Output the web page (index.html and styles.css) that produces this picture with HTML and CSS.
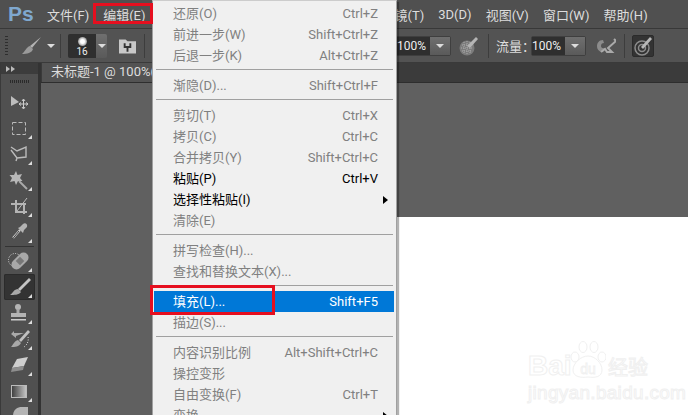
FILE: index.html
```html
<!DOCTYPE html>
<html lang="zh">
<head>
<meta charset="utf-8">
<title>Photoshop 编辑菜单</title>
<link rel="stylesheet" href="styles.css">
</head>
<body>
<div class="app">
	<div class="menubar">
		<span class="logo">Ps</span>
		<span>文件(F)</span>
		<span class="on">编辑(E)</span>
		<span class="bar_gap"></span>
		<span>镜(T)</span>
		<span>3D(D)</span>
		<span>视图(V)</span>
		<span>窗口(W)</span>
		<span>帮助(H)</span>
	</div>
	<div class="options">
		<i class="grip"></i>
		<svg class="opt_brush" width="20" height="20" viewBox="0 0 20 20"><path d="M19 1 L10 12 L8 10 Z" fill="#b4b4b4"/><path d="M8 10 L11 13 C10 17 5 18 0 18 C3 16 4 11 8 10 Z" fill="#9a9a9a"/></svg>
		<i class="caret"></i>
		<i class="sep"></i>
		<div class="preset">
			<div class="preset_val"><b></b><span>16</span></div>
			<div class="drop"><i class="caret"></i></div>
		</div>
		<svg class="opt_stamp" width="17" height="16" viewBox="0 0 18 16"><path d="M0 1 H7 L9 3 H18 V16 H0 Z" fill="#c8c8c8"/><path d="M5 5 H7 V8 H11 V5 H13 V10 H10 V14 H8 V10 H5 Z" fill="#333"/></svg>
		<i class="sep sep_first"></i>
		<div class="field field_a"><div class="val">100%</div><div class="drop"><i class="caret"></i></div></div>
		<svg class="opt_icon icon_a" width="20" height="20" viewBox="0 0 20 20"><circle cx="8" cy="12" r="7.5" fill="#7c7c7c"/><path d="M3 9 H13 M2 12 H14 M3 15 H13 M5 6 V18 M8 5 V19 M11 6 V18" stroke="#aaa" stroke-dasharray="1 1"/><path d="M17 1 L19 3 L11 12 L8 10 Z" fill="#b4b4b4"/></svg>
		<i class="sep sep_b"></i>
		<span class="flow">流量：</span>
		<div class="field field_b"><div class="val">100%</div><div class="drop"><i class="caret"></i></div></div>
		<svg class="opt_icon icon_b" width="20" height="16" viewBox="0 0 20 16"><path d="M7 2 C3 2 1 5 1 8 C1 12 4 14 7 14 L9 10 C6 11 5 9 5 8 C5 6 6 5 8 5 Z" fill="#8c8c8c"/><path d="M18 1 L20 3 L12 10 L16 14 H11 L9 11 L5 14" fill="none" stroke="#aaa" stroke-width="2"/></svg>
		<i class="sep sep_c"></i>
		<div class="toggle"><svg width="20" height="20" viewBox="0 0 20 20"><circle cx="9" cy="12" r="7" fill="none" stroke="#8c8c8c" stroke-width="1.5"/><circle cx="9" cy="12" r="3.5" fill="none" stroke="#8c8c8c" stroke-width="1.5"/><path d="M17 1 L19 3 L10 13 L8 11 Z" fill="#b8b8b8"/></svg></div>
	</div>
	<div class="main">
		<div class="tools">
			<div class="tools_head"><i></i><i></i></div>
			<div class="tools_grip"></div>
			<div class="tool"><svg viewBox="0 0 31 26"><path d="M7 7 L15 13 L7 17 Z" fill="#bdbdbd"/><path d="M19.5 10.5 V19.5 M15 15 H24" stroke="#ccc"/><path d="M18 12 L19.5 10 L21 12 M18 18 L19.5 20 L21 18 M17 13.5 L15 15 L17 16.5 M22 13.5 L24 15 L22 16.5" stroke="#ccc" fill="none"/></svg></div>
			<div class="tool more"><svg viewBox="0 0 31 26"><rect x="8.5" y="7.5" width="13" height="12" fill="none" stroke="#bbb" stroke-dasharray="4 2"/></svg></div>
			<div class="tool more"><svg viewBox="0 0 31 26"><path d="M7 6 L13 10 L22 6 V16 L13 17 L7 9 M13 17 L12 20" fill="none" stroke="#bbb" stroke-width="1.4"/></svg></div>
			<div class="tool more"><svg viewBox="0 0 31 26"><path d="M12 4 L13.5 8 L18 7 L16 11 L18.5 14 L14 14 L12 18 L10.5 14 L6 15 L8 11 L5.5 8 L10 8 Z" fill="#b8b8b8"/><path d="M15 14 L23 22" stroke="#aaa" stroke-width="2"/></svg></div>
			<div class="tool more"><svg viewBox="0 0 31 26"><path d="M7 11 H22 M12 7 V19 H23 M20 11 V21" fill="none" stroke="#b4b4b4" stroke-width="2"/><path d="M13 18 L23 5" stroke="#bbb"/></svg></div>
			<div class="tool more"><svg viewBox="0 0 31 26"><path d="M9 19 L16 11" stroke="#ccc" stroke-width="2"/><path d="M8.5 20 L15 12" stroke="#444"/><path d="M14 9 L19 14 L20 11 L23 8 C24 5 21 3 19 5 L16 8 Z" fill="#b4b4b4"/></svg></div>
			<div class="tool_sep"></div>
			<div class="tool more"><svg viewBox="0 0 31 26"><circle cx="11" cy="12" r="6.5" fill="none" stroke="#ddd" stroke-dasharray="1 1.5"/><rect x="6" y="8" width="20" height="10" rx="5" transform="rotate(-45 16 13)" fill="#a8a8a8"/><rect x="13" y="10" width="6" height="6" transform="rotate(-45 16 13)" fill="#777"/></svg></div>
			<div class="tool more active"><svg viewBox="0 0 31 26"><path d="M25 4 L27 6 L16 17 L14 15 Z" fill="#c4c4c4"/><path d="M14 15 L17 18 C15 21 10 21 6 21 C9 19 10 15 14 15 Z" fill="#a8a8a8"/></svg></div>
			<div class="tool more"><svg viewBox="0 0 31 26"><circle cx="14" cy="7" r="3" fill="#b4b4b4"/><rect x="12.5" y="9" width="3" height="5" fill="#a8a8a8"/><rect x="7" y="13" width="15" height="4" fill="#b4b4b4"/><rect x="7" y="19" width="15" height="1.5" fill="#ccc"/></svg></div>
			<div class="tool more"><svg viewBox="0 0 31 26"><path d="M7 8 L10 5 V7 H20 L12 10 V12 Z" fill="#aaa"/><path d="M24 4 L26 6 L17 16 L15 14 Z" fill="#c0c0c0"/><path d="M14 14 L17 17 C15 21 11 21 7 21 C9 19 10 15 14 14 Z" fill="#a8a8a8"/><path d="M24 11 C25 15 23 19 20 21" fill="none" stroke="#ddd" stroke-dasharray="1 1.5"/></svg></div>
			<div class="tool more"><svg viewBox="0 0 31 26"><path d="M13 7 L24 5 L20 14 L8 16 Z" fill="#cfcfcf"/><path d="M8 16 L20 14 L19 18 L7 20 Z" fill="#8e8e8e"/></svg></div>
			<div class="tool more"><svg viewBox="0 0 31 26"><defs><linearGradient id="grad"><stop offset="0" stop-color="#3c3c3c"/><stop offset="1" stop-color="#c8c8c8"/></linearGradient></defs><rect x="7.5" y="7.5" width="15" height="12" fill="url(#grad)" stroke="#bbb"/></svg></div>
			<div class="tool"><svg viewBox="0 0 31 26"><path d="M9 12 C9 6 13 3 18 3 H24 V12 Z" fill="#b4b4b4"/></svg></div>
		</div>
		<div class="work">
			<div class="tabs"><div class="tab">未标题-1 @ 100%(</div></div>
			<div class="paste">
				<div class="doc"></div>
			</div>
		</div>
	</div>

	<div class="menu">
		<div class="row"><span>还原(O)</span><span>Ctrl+Z</span></div>
		<div class="row"><span>前进一步(W)</span><span>Shift+Ctrl+Z</span></div>
		<div class="row"><span>后退一步(K)</span><span>Alt+Ctrl+Z</span></div>
		<div class="line"></div>
		<div class="row"><span>渐隐(D)...</span><span>Shift+Ctrl+F</span></div>
		<div class="line"></div>
		<div class="row"><span>剪切(T)</span><span>Ctrl+X</span></div>
		<div class="row"><span>拷贝(C)</span><span>Ctrl+C</span></div>
		<div class="row"><span>合并拷贝(Y)</span><span>Shift+Ctrl+C</span></div>
		<div class="row en"><span>粘贴(P)</span><span>Ctrl+V</span></div>
		<div class="row en sub"><span>选择性粘贴(I)</span></div>
		<div class="row"><span>清除(E)</span></div>
		<div class="line"></div>
		<div class="row"><span>拼写检查(H)...</span></div>
		<div class="row"><span>查找和替换文本(X)...</span></div>
		<div class="line"></div>
		<div class="row cur"><span>填充(L)...</span><span>Shift+F5</span></div>
		<div class="row"><span>描边(S)...</span></div>
		<div class="line"></div>
		<div class="row"><span>内容识别比例</span><span>Alt+Shift+Ctrl+C</span></div>
		<div class="row"><span>操控变形</span></div>
		<div class="row"><span>自由变换(F)</span><span>Ctrl+T</span></div>
		<div class="row sub"><span>变换</span></div>
	</div>

	<div class="mark mark_menu"></div>
	<div class="mark mark_fill"></div>

	<div class="water">
		<div class="water_top">
			<span class="water_bai">Bai</span>
			<svg class="paw" width="36" height="40" viewBox="0 0 36 40"><g fill="#fff" stroke="#f0f0f0"><ellipse cx="5" cy="16" rx="4" ry="5"/><ellipse cx="13" cy="6" rx="4" ry="5.500"/><ellipse cx="24" cy="6" rx="4" ry="5.500"/><ellipse cx="32" cy="16" rx="4" ry="5"/><path d="M18 15 C25 15 32 22 32 29 C32 36 25 37 18 36 C11 37 3 36 3 29 C3 22 11 15 18 15 Z"/></g><text x="18" y="33" class="paw_du">du</text></svg>
			<span class="water_cn">经验</span>
		</div>
		<div class="water_url">jingyan.baidu.com</div>
	</div>
</div>
</body>
</html>
```

FILE: styles.css
```css
*{ margin:0; padding:0; box-sizing:border-box;}
html,body{ width:688px; height:415px; overflow:hidden;}
body{ font-family:Roboto,"Noto Sans CJK SC",sans-serif; font-size:13px; color:#ddd; background:#606060;}
.app{ width:688px; height:415px; position:relative; overflow:hidden; display:flex; flex-direction:column;}

/* menu bar */
.menubar{ height:29px; background:#505050; border-bottom:1px solid #383838; display:flex; align-items:center; gap:14px; padding-left:8px; white-space:nowrap; flex:none;}
.menubar .logo{ font-family:"Liberation Sans",sans-serif; font-size:21px; font-weight:bold; color:#7fa8cf; width:22px; margin-right:3px;}
.bar_gap{ width:221px; height:1px;}

/* options bar */
.options{ height:34px; background:#535353; border-bottom:1px solid #3a3a3a; display:flex; align-items:center; flex:none; padding-left:5px;}
.grip{ width:3px; height:20px; background:repeating-linear-gradient(#2e2e2e 0 1px,transparent 1px 3px);}
.opt_brush{ margin-left:14px;}
.caret{ display:block; width:0; height:0; border:4px solid transparent; border-top:4px solid #ddd; border-bottom:0;}
.options > .caret{ margin-left:5px;}
.sep{ display:block; width:1px; height:24px; background:#3d3d3d; margin-left:5px;}
.preset{ width:39px; height:24px; display:flex; margin-left:7px; border-radius:2px; overflow:hidden;}
.preset_val{ width:28px; background:#2f2f2f; display:flex; flex-direction:column; align-items:center; font-size:10px; color:#eee; line-height:10px; padding-top:3px;}
.preset_val b{ display:block; width:9px; height:9px; border-radius:50%; background:radial-gradient(#fff 30%,#666 90%); margin-bottom:1px;}
.drop{ background:linear-gradient(#6f6f6f,#5a5a5a); display:flex; align-items:center; justify-content:center; flex:1;}
.opt_stamp{ margin-left:12px;}
.sep_first{ margin-left:8px;}
.field{ height:20px; display:flex; border:1px solid #3f3f3f; border-radius:2px; font-size:12px; color:#eee;}
.field_a{ width:100px; margin-left:206px; margin-right:8px;}
.val{ flex:1; background:#2f2f2f; text-align:right; padding-right:4px; line-height:18px;}
.field .drop{ flex:none; width:20px;}
.opt_icon{ flex:none;}
.sep_b{ margin-left:9px;}
.flow{ margin-left:7px; width:35px; white-space:nowrap;}
.field_b{ width:55px;}
.icon_b{ margin-left:10px;}
.sep_c{ margin-left:8px;}
.toggle{ width:22px; height:22px; margin-left:7px; background:#333; border:1px solid #2b2b2b; border-radius:2px; display:flex; align-items:center; justify-content:center;}

.main{ flex:1; display:flex; min-height:0;}

/* tool column */
.tools{ width:41px; background:#505050; border-left:1px solid #3a3a3a; border-right:3px solid #333; flex:none; display:flex; flex-direction:column; align-items:flex-start; padding-left:3px;}
.tools_head{ width:37px; margin-left:-3px; height:11px; background:#3c3c3c; display:flex; gap:1px; align-items:center; padding-left:5px; flex:none;}
.tools_head i{ display:block; border:3px solid transparent; border-left:4px solid #bbb; border-right:0;}
.tools_grip{ width:20px; height:3px; margin:6px 0 6px 6px; background:repeating-linear-gradient(90deg,#2a2a2a 0 1px,transparent 1px 2px); flex:none;}
.tool{ width:31px; height:26px; position:relative; flex:none;}
.tool svg{ display:block; width:31px; height:26px;}
.tool.more::after{ content:""; position:absolute; right:3px; bottom:2px; border:2px solid transparent; border-right-color:#ddd; border-bottom-color:#ddd;}
.tool.active{ background:#333; border-radius:2px; box-shadow:inset 0 0 0 1px #2b2b2b;}
.tool_sep{ width:29px; height:2px; margin:1px 0 0 1px; border-top:1px solid #333; flex:none;}

/* workspace */
.work{ flex:1; display:flex; flex-direction:column; min-width:0;}
.tabs{ height:20px; background:#3b3b3b; border-bottom:1px solid #2e2e2e; flex:none;}
.tab{ width:140px; height:19px; background:#535353; padding-left:9px; line-height:18px; white-space:nowrap; border-left:1px solid #3a3a3a;}
.paste{ flex:1; background:#606060; padding-top:134px; display:flex; flex-direction:column; align-items:flex-end;}
.doc{ width:300px; flex:1; background:#fff;}

/* edit menu */
.menu{ position:absolute; left:152px; top:0; width:245px; height:430px; background:#f0f0f0; border:1px solid #a0a0a0; border-top-color:#ccc; padding:2px 2px 0 1px; box-shadow:2px 2px 1px rgba(0,0,0,.3); color:#808080;}
.row{ height:21px; line-height:21px; padding:0 16px 0 19px; display:flex; justify-content:space-between; white-space:nowrap; position:relative;}
.row.en{ color:#000;}
.row.cur{ background:#0078d7; color:#fff;}
.row.sub::after{ content:""; position:absolute; right:6px; top:7px; border:4px solid transparent; border-left:5px solid #000; border-right:0;}
.line{ height:9px; padding-top:3px; margin:0 1px 0 2px;}
.line::before{ content:""; display:block; height:1px; background:#a0a0a0;}

/* red marks over the screenshot */
.mark{ position:absolute; border:3px solid #e60f1f;}
.mark_menu{ left:93px; top:3px; width:60px; height:21px;}
.mark_fill{ left:150px; top:285px; width:125px; height:30px;}

/* watermark */
.water{ position:absolute; left:528px; top:341px; width:124px; display:flex; flex-direction:column; color:#fff; -webkit-text-stroke:1px #f0f0f0;}
.water_top{ display:flex; align-items:flex-end; height:40px;}
.water_bai{ font-family:"Liberation Sans",sans-serif; font-size:28px; line-height:30px; width:42px; font-weight:bold;}
.paw{ flex:none;}
.paw_du{ font-family:"Liberation Sans",sans-serif; font-size:14px; text-anchor:middle; fill:#fff; stroke:#f0f0f0; stroke-width:.8;}
.water_cn{ font-size:20px; line-height:26px; white-space:nowrap; margin-left:2px;}
.water_url{ font-family:"Liberation Sans",sans-serif; font-size:19px; letter-spacing:.3px; line-height:20px; margin-top:2px; white-space:nowrap;}
```
